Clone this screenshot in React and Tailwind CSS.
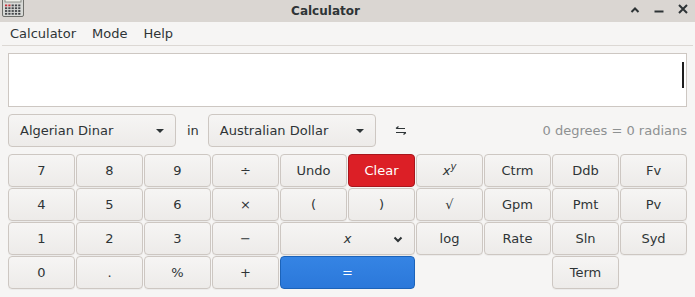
import React from "react";

const F = { fontFamily: '"DejaVu Sans", "Liberation Sans", sans-serif' };

function CalcIcon() {
  return (
    <svg width="22" height="17" viewBox="0 0 22 17">
      <rect x="0.5" y="-3" width="21" height="19.5" rx="1.5" fill="#d7d9d6" stroke="#6e6f6b" />
      <rect x="3" y="-1" width="16" height="3" fill="#eef0ea" stroke="#7c7e78" strokeWidth="0.8" />
      {[0, 1, 2, 3].map((r) =>
        [0, 1, 2, 3, 4].map((c) => (
          <rect
            key={r + "-" + c}
            x={3 + c * 3.3}
            y={4.5 + r * 2.8}
            width="2.2"
            height="1.8"
            fill={r === 0 && c < 2 ? "#c8303a" : c === 4 && r > 1 ? "#3a3c40" : "#45474b"}
          />
        ))
      )}
    </svg>
  );
}

function Btn({ children, className = "", variant = "normal" }) {
  const base =
    "flex items-center justify-center rounded-[4px] border text-[13px] h-[33px]";
  const v =
    variant === "red"
      ? "bg-[#dc1f26] border-[#a8161c] text-white"
      : variant === "blue"
      ? "bg-gradient-to-b from-[#3584e4] to-[#2b78da] border-[#1c63b9] text-white"
      : "bg-gradient-to-b from-[#f6f5f4] to-[#edebe9] border-[#cdc7c2] text-[#2e3436] shadow-[0_1px_0_rgba(0,0,0,0.04)]";
  return <div className={`${base} ${v} ${className}`}>{children}</div>;
}

function Combo({ label }) {
  return (
    <div className="flex h-[33px] w-[168px] items-center justify-between rounded-[4px] border border-[#cdc7c2] bg-gradient-to-b from-[#f6f5f4] to-[#edebe9] pl-[11px] pr-[10px] text-[13px] text-[#2e3436]">
      <span>{label}</span>
      <svg width="10" height="6" viewBox="0 0 10 6">
        <path d="M1 1 L9 1 L5 5 Z" fill="#2e3436" />
      </svg>
    </div>
  );
}

export default function App() {
  const X = <span className="italic" style={F}>x</span>;
  return (
    <div className="h-[297px] w-[695px] overflow-hidden bg-[#f6f5f4] text-[#2e3436]" style={F}>
      {/* title bar */}
      <div className="relative flex h-[22px] items-center justify-center bg-[#dad6d2]">
        <div className="absolute left-[2px] top-0">
          <CalcIcon />
        </div>
        <span className="mr-[44px] text-[12px] font-bold text-[#2e3436]">Calculator</span>
        <div className="absolute right-[7px] top-0 flex h-[18px] items-center gap-[14px]">
          <svg width="10" height="7" viewBox="0 0 10 7">
            <path d="M1.5 6 L5 2.5 L8.5 6" stroke="#2e3436" strokeWidth="2" fill="none" />
          </svg>
          <svg width="10" height="8" viewBox="0 0 10 8">
            <rect x="0.5" y="5.5" width="9" height="2" fill="#2e3436" />
          </svg>
          <svg width="10" height="10" viewBox="0 0 10 10">
            <path d="M1 1 L9 9 M9 1 L1 9" stroke="#2e3436" strokeWidth="2" />
          </svg>
        </div>
      </div>
      {/* menu bar */}
      <div className="mx-[2px] flex h-[24px] items-center border-b border-[#dcd8d4] text-[13px]">
        <span className="px-[8px]">Calculator</span>
        <span className="px-[8px]">Mode</span>
        <span className="px-[8px]">Help</span>
      </div>
      <div className="px-[8px] pt-[7px]">
        {/* display */}
        <div className="relative h-[54px] border border-[#cdc7c2] bg-white">
          <div className="absolute right-[2px] top-[8px] h-[26px] w-[2px] bg-[#1e1e1e]" />
        </div>
        {/* combo row */}
        <div className="mt-[7px] flex h-[33px] items-center text-[13px]">
          <Combo label="Algerian Dinar" />
          <span className="ml-[11px] mr-[9px]">in</span>
          <Combo label="Australian Dollar" />
          <svg className="ml-[19px]" width="12" height="9" viewBox="0 0 12 9">
            <path d="M1 2.5 H10 M1 2.5 L3.5 0.5 M1 6.5 H11 M11 6.5 L8.5 8.5" stroke="#2e3436" strokeWidth="1.2" fill="none" />
          </svg>
          <span className="ml-auto pl-[2px] text-[#8e9192]">0 degrees = 0 radians</span>
        </div>
        {/* keypad */}
        <div className="mt-[7px] grid grid-cols-[repeat(10,67px)] grid-rows-[repeat(4,33px)] gap-[1px]">
          <Btn>7</Btn>
          <Btn>8</Btn>
          <Btn>9</Btn>
          <Btn>÷</Btn>
          <Btn>Undo</Btn>
          <Btn variant="red">Clear</Btn>
          <Btn>
            <span className="italic">x</span>
            <span className="relative -top-[4px] text-[10px] italic">y</span>
          </Btn>
          <Btn>Ctrm</Btn>
          <Btn>Ddb</Btn>
          <Btn>Fv</Btn>

          <Btn>4</Btn>
          <Btn>5</Btn>
          <Btn>6</Btn>
          <Btn>×</Btn>
          <Btn>(</Btn>
          <Btn>)</Btn>
          <Btn>√</Btn>
          <Btn>Gpm</Btn>
          <Btn>Pmt</Btn>
          <Btn>Pv</Btn>

          <Btn>1</Btn>
          <Btn>2</Btn>
          <Btn>3</Btn>
          <Btn>−</Btn>
          <Btn className="relative col-span-2">
            {X}
            <svg className="absolute right-[11px] top-[13px]" width="10" height="7" viewBox="0 0 10 7">
              <path d="M1.5 1.5 L5 5 L8.5 1.5" stroke="#2e3436" strokeWidth="2" fill="none" />
            </svg>
          </Btn>
          <Btn>log</Btn>
          <Btn>Rate</Btn>
          <Btn>Sln</Btn>
          <Btn>Syd</Btn>

          <Btn>0</Btn>
          <Btn>.</Btn>
          <Btn>%</Btn>
          <Btn>+</Btn>
          <Btn variant="blue" className="col-span-2">=</Btn>
          <div />
          <div />
          <Btn>Term</Btn>
          <div />
        </div>
      </div>
    </div>
  );
}
